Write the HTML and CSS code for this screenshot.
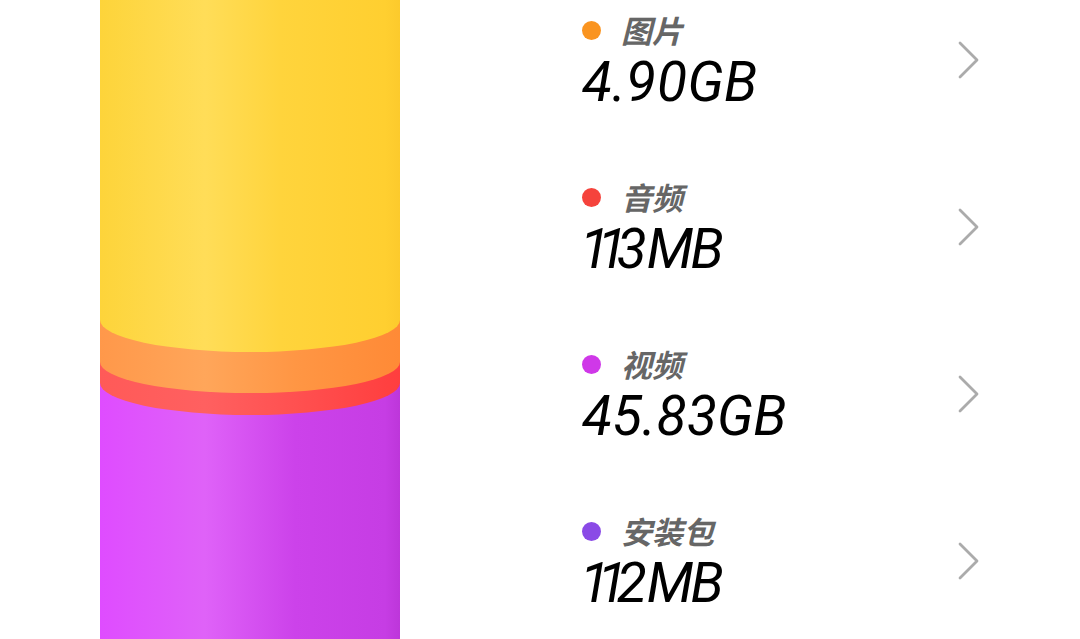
FILE: index.html
```html
<!DOCTYPE html>
<html lang="zh">
<head>
<meta charset="utf-8">
<title>存储</title>
<link rel="stylesheet" href="styles.css">
</head>
<body>
<div class="page">
  <div class="chart">
    <svg width="300" height="639" viewBox="0 0 300 639" xmlns="http://www.w3.org/2000/svg">
      <defs>
        <linearGradient id="gY" x1="0" y1="0" x2="1" y2="0">
          <stop offset="0" stop-color="#fdd43a"/>
          <stop offset="0.35" stop-color="#ffdd58"/>
          <stop offset="0.6" stop-color="#ffd43c"/>
          <stop offset="0.95" stop-color="#ffcf30"/>
          <stop offset="1" stop-color="#fcca2c"/>
        </linearGradient>
        <linearGradient id="gO" x1="0" y1="0" x2="1" y2="0">
          <stop offset="0" stop-color="#ff984a"/>
          <stop offset="0.35" stop-color="#ffa65a"/>
          <stop offset="0.65" stop-color="#ff9644"/>
          <stop offset="1" stop-color="#ff8a36"/>
        </linearGradient>
        <linearGradient id="gR" x1="0" y1="0" x2="1" y2="0">
          <stop offset="0" stop-color="#ff5a58"/>
          <stop offset="0.35" stop-color="#ff6060"/>
          <stop offset="1" stop-color="#ff3e3e"/>
        </linearGradient>
        <linearGradient id="gP" x1="0" y1="0" x2="1" y2="0">
          <stop offset="0" stop-color="#df4cff"/>
          <stop offset="0.35" stop-color="#df62f8"/>
          <stop offset="0.65" stop-color="#cc42ea"/>
          <stop offset="0.95" stop-color="#c63de4"/>
          <stop offset="1" stop-color="#bd36da"/>
        </linearGradient>
      </defs>
      <rect x="0" y="340" width="300" height="299" fill="url(#gP)"/>
      <path d="M0 320 H300 V383 A150 32 0 0 1 0 383 Z" fill="url(#gR)"/>
      <path d="M0 300 H300 V362 A150 31 0 0 1 0 362 Z" fill="url(#gO)"/>
      <path d="M0 0 H300 V320 A150 32 0 0 1 0 320 Z" fill="url(#gY)"/>
    </svg>
  </div>
  <ul class="list">
    <li class="row">
      <div class="info">
        <div class="label"><span class="dot dot-img"></span><span class="name">图片</span></div>
        <div class="size">4.90GB</div>
      </div>
      <svg class="chev" width="24" height="40" viewBox="0 0 24 40"><path d="M3 3 L20 20 L3 37" fill="none" stroke="#ababab" stroke-width="2.8" stroke-linecap="round" stroke-linejoin="round"/></svg>
    </li>
    <li class="row">
      <div class="info">
        <div class="label"><span class="dot dot-audio"></span><span class="name">音频</span></div>
        <div class="size"><span class="narrow">11</span>3<span class="unit">MB</span></div>
      </div>
      <svg class="chev" width="24" height="40" viewBox="0 0 24 40"><path d="M3 3 L20 20 L3 37" fill="none" stroke="#ababab" stroke-width="2.8" stroke-linecap="round" stroke-linejoin="round"/></svg>
    </li>
    <li class="row">
      <div class="info">
        <div class="label"><span class="dot dot-video"></span><span class="name">视频</span></div>
        <div class="size">45.83GB</div>
      </div>
      <svg class="chev" width="24" height="40" viewBox="0 0 24 40"><path d="M3 3 L20 20 L3 37" fill="none" stroke="#ababab" stroke-width="2.8" stroke-linecap="round" stroke-linejoin="round"/></svg>
    </li>
    <li class="row">
      <div class="info">
        <div class="label"><span class="dot dot-apk"></span><span class="name">安装包</span></div>
        <div class="size"><span class="narrow">11</span>2<span class="unit">MB</span></div>
      </div>
      <svg class="chev" width="24" height="40" viewBox="0 0 24 40"><path d="M3 3 L20 20 L3 37" fill="none" stroke="#ababab" stroke-width="2.8" stroke-linecap="round" stroke-linejoin="round"/></svg>
    </li>
  </ul>
</div>
</body>
</html>
```
FILE: styles.css
```css
html, body {
  margin: 0;
  padding: 0;
  background: #ffffff;
}
body {
  width: 1080px;
  height: 639px;
  overflow: hidden;
  font-family: "Noto Sans CJK SC", "Noto Sans", sans-serif;
}
.page {
  display: flex;
  height: 639px;
}
.chart {
  flex: none;
  width: 300px;
  height: 639px;
  margin-left: 100px;
}
.chart svg {
  display: block;
}
.list {
  list-style: none;
  margin: -24px 0 0 182px;
  padding: 0;
  width: 398px;
}
.row {
  height: 167px;
  display: flex;
  align-items: center;
  justify-content: space-between;
}
.info {
  display: flex;
  flex-direction: column;
  gap: 9px;
}
.label {
  display: flex;
  align-items: center;
  height: 36px;
}
.dot {
  width: 19px;
  height: 19px;
  border-radius: 50%;
  flex: none;
}
.dot-img { background: #fa9420; }
.dot-audio { background: #f5433c; }
.dot-video { background: #cf38e8; }
.dot-apk { background: #8a4ae6; }
.name {
  margin-left: 20px;
  font-size: 31px;
  line-height: 36px;
  font-weight: 700;
  font-style: italic;
  color: #666666;
}
.size {
  height: 50px;
  font-family: Roboto, "Liberation Sans", sans-serif;
  font-size: 55px;
  line-height: 50px;
  font-style: italic;
  font-weight: 400;
  font-feature-settings: "pnum" 1;
  font-variant-numeric: proportional-nums;
  color: #000000;
  white-space: nowrap;
}
.narrow {
  letter-spacing: -6px;
}
.unit {
  letter-spacing: -3px;
}
.chev {
  flex: none;
  margin-right: -1px;
}
```
